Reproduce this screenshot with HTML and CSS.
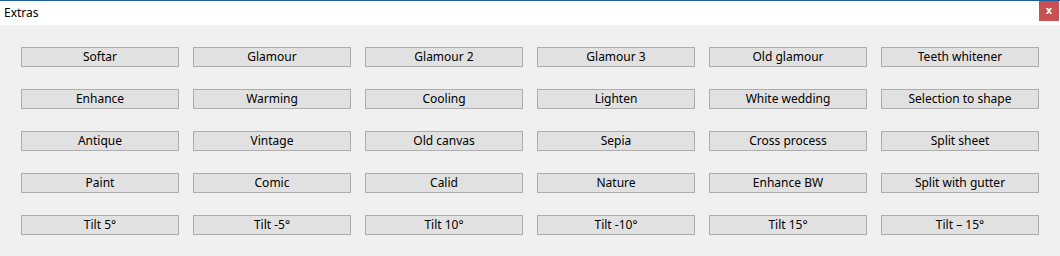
FILE: index.html
```html
<!DOCTYPE html>
<html lang="en">
<head>
    <meta charset="UTF-8">
    <title>Extras</title>
    <link rel="stylesheet" href="styles.css">
</head>
<body>
    <div class="window">
        <div class="titlebar">
            <span class="title">Extras</span>
            <button class="close" type="button">x</button>
        </div>
        <div class="extras">
            <button class="extra">Softar</button>
            <button class="extra">Glamour</button>
            <button class="extra">Glamour 2</button>
            <button class="extra">Glamour 3</button>
            <button class="extra">Old glamour</button>
            <button class="extra">Teeth whitener</button>

            <button class="extra">Enhance</button>
            <button class="extra">Warming</button>
            <button class="extra">Cooling</button>
            <button class="extra">Lighten</button>
            <button class="extra">White wedding</button>
            <button class="extra">Selection to shape</button>

            <button class="extra">Antique</button>
            <button class="extra">Vintage</button>
            <button class="extra">Old canvas</button>
            <button class="extra">Sepia</button>
            <button class="extra">Cross process</button>
            <button class="extra">Split sheet</button>

            <button class="extra">Paint</button>
            <button class="extra">Comic</button>
            <button class="extra">Calid</button>
            <button class="extra">Nature</button>
            <button class="extra">Enhance BW</button>
            <button class="extra">Split with gutter</button>

            <button class="extra">Tilt 5&deg;</button>
            <button class="extra">Tilt -5&deg;</button>
            <button class="extra">Tilt 10&deg;</button>
            <button class="extra">Tilt -10&deg;</button>
            <button class="extra">Tilt 15&deg;</button>
            <button class="extra">Tilt &ndash; 15&deg;</button>
        </div>
    </div>
</body>
</html>
```

FILE: styles.css
```css
body {
    margin: 0;
    padding: 0;
    background-color: #f0f0f0;
    font-family: "Noto Sans", "Open Sans", sans-serif;
    font-size: 12px;
    color: #000;
}

.window {
    width: 1060px;
    height: 256px;
    background-color: #f0f0f0;
}

.titlebar {
    height: 24px;
    border-top: 1px solid #1c5f9e;
    background-color: #fff;
    display: flex;
    align-items: center;
    justify-content: space-between;
}

.title {
    padding-left: 4px;
    padding-bottom: 2px;
}

.close {
    width: 20px;
    height: 20px;
    margin-right: 1px;
    margin-bottom: 4px;
    border: none;
    background-color: #c75050;
    color: #fff;
    font-family: "DejaVu Sans", sans-serif;
    font-size: 10px;
    font-weight: bold;
    padding: 0;
    line-height: 18px;
}

.extras {
    display: grid;
    grid-template-columns: repeat(6, 158px);
    column-gap: 14px;
    row-gap: 22px;
    padding: 22px 0 0 21px;
}

.extra {
    height: 20px;
    padding: 0;
    background-color: #e1e1e1;
    border: 1px solid #adadad;
    font-family: "Noto Sans", "Open Sans", sans-serif;
    font-size: 12px;
    color: #000;
    line-height: 16px;
}
```
